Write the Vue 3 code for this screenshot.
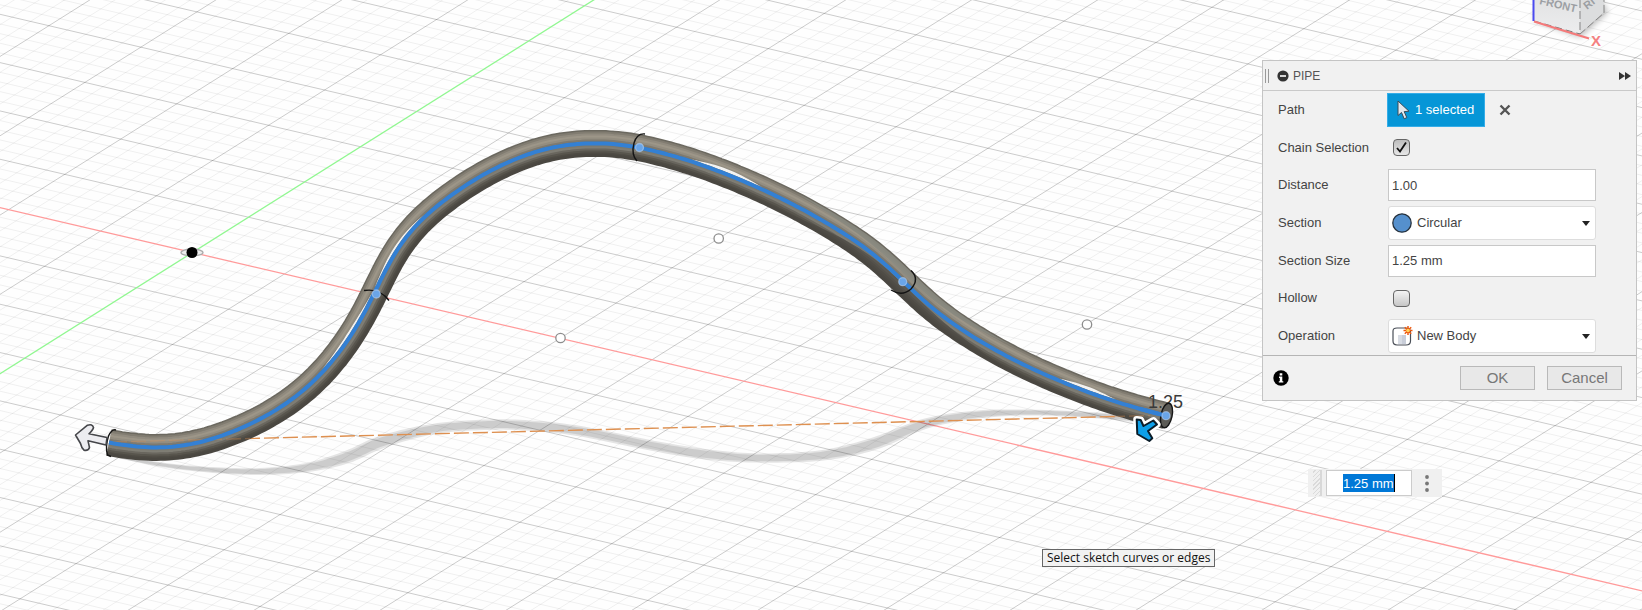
<script setup>
import { ref } from 'vue'

const distance = ref('1.00')
const sectionSize = ref('1.25 mm')
const floatingSize = ref('1.25 mm')
const chain = ref(true)
const hollow = ref(false)
const section = ref('Circular')
const operation = ref('New Body')

/* Ground grid: an origin and the two cell vectors */
const origin = [192.5, 252.5]
const u = [91.9, 21.45]
const v = [-56, 35.25]
const at = (a, b) => [origin[0] + a * u[0] + b * v[0], origin[1] + a * u[1] + b * v[1]]
const seg = (p, q) => `M${p[0].toFixed(1)} ${p[1].toFixed(1)}L${q[0].toFixed(1)} ${q[1].toFixed(1)}`

let minor = ''
let major = ''
for (let i = -150; i <= 200; i++) {
  if (i === 0) continue
  const line = seg(at(i / 5, -40), at(i / 5, 40)) + seg(at(-40, i / 5), at(40, i / 5))
  if (i % 5 === 0) major += line
  else minor += line
}
const xAxis = seg(at(-40, 0), at(40, 0))
const yAxis = seg(at(0, -40), at(0, 40))

/* Smooth curve through control points; extra components are interpolated too */
function smooth(pts, steps = 10) {
  const out = []
  for (let i = 0; i < pts.length - 1; i++) {
    const p0 = pts[Math.max(i - 1, 0)]
    const p1 = pts[i]
    const p2 = pts[i + 1]
    const p3 = pts[Math.min(i + 2, pts.length - 1)]
    for (let s = 0; s < steps; s++) {
      const t = s / steps
      out.push(p1.map((_, k) =>
        0.5 * (2 * p1[k] + (p2[k] - p0[k]) * t +
          (2 * p0[k] - 5 * p1[k] + 4 * p2[k] - p3[k]) * t * t +
          (3 * p1[k] - p0[k] - 3 * p2[k] + p3[k]) * t * t * t)))
    }
  }
  out.push(pts[pts.length - 1])
  return out
}

/* Evenly spaced samples along a polyline */
function resample(pts, step) {
  const out = [pts[0]]
  let need = step
  for (let i = 1; i < pts.length; i++) {
    let a = pts[i - 1]
    const b = pts[i]
    let len = Math.hypot(b[0] - a[0], b[1] - a[1])
    while (len >= need) {
      const t = need / len
      a = [a[0] + (b[0] - a[0]) * t, a[1] + (b[1] - a[1]) * t]
      out.push(a)
      len -= need
      need = step
    }
    need -= len
  }
  out.push(pts[pts.length - 1])
  return out
}

/* Moving average whose window narrows towards both ends */
function relax(pts, reach) {
  return pts.map((_, i) => {
    const r = Math.min(reach, i, pts.length - 1 - i)
    let x = 0
    let y = 0
    for (let k = i - r; k <= i + r; k++) {
      x += pts[k][0]
      y += pts[k][1]
    }
    return [x / (2 * r + 1), y / (2 * r + 1)]
  })
}

function shifted(pts, offset) {
  return pts.map((p, i) => {
    const a = pts[Math.max(i - 1, 0)]
    const b = pts[Math.min(i + 1, pts.length - 1)]
    const dx = b[0] - a[0]
    const dy = b[1] - a[1]
    const len = Math.hypot(dx, dy) || 1
    const d = typeof offset === 'function' ? offset(p, i, pts.length) : offset
    return [p[0] - (dy / len) * d, p[1] + (dx / len) * d]
  })
}

const join = (pts) => 'M' + pts.map((p) => `${p[0].toFixed(1)} ${p[1].toFixed(1)}`).join('L')

const raw = smooth([
  [109, 442.5], [132, 447], [158, 448.5], [184, 446.5], [208, 441], [243, 428], [275, 411.5], [304, 391], [330, 365],
  [352, 335], [368, 307], [376, 290], [389, 262], [405.5, 236], [421, 219], [440, 203], [473, 180], [507, 162],
  [540, 149.5], [567, 144], [597, 142.5], [623, 144], [639, 147], [673, 155.5], [700, 164], [740, 179.5],
  [787, 201], [833, 226.5], [873, 253], [904, 282], [925, 302.5], [946, 319.5], [986.7, 345.5], [1026.7, 366.5],
  [1073, 386.5], [1117, 402.5], [1166, 415.7],
])
const centre = relax(relax(relax(resample(raw, 4), 5), 5), 4)

const profile = [
  [-12, 3, '#6b685f'], [-10.5, 3, '#817c71'], [-8.5, 3, '#918b7f'], [-6.5, 3, '#9d9688'],
  [-4.5, 3, '#938d80'], [-2.5, 3, '#7f7a6f'], [0, 4, '#716d64'], [2.5, 3, '#7a786f'],
  [4.5, 3, '#7f7d74'], [6.5, 3, '#69665e'], [8.5, 3, '#58554d'], [10.5, 3, '#4e4b44'], [12, 3, '#4a4741'],
]
const tube = profile.map(([d, w, color]) => ({ d: join(shifted(centre, d)), w, color }))
const spine = join(centre)

const lens = (pts, near, far) =>
  join([
    ...shifted(pts, near),
    ...shifted(pts, (p, i, n) => near + far * Math.sin((Math.PI * i) / (n - 1))).reverse(),
  ]) + 'Z'
const range = (from, to) => centre.filter((p) => p[0] > from && p[0] < to)

/* Darker belly and greyer back around the last joint, then the bright reflections */
const belly = lens(range(790, 1010), 11, -9)
const back = lens(range(790, 1010), -12, 6)
const glints = [
  lens(range(322, 376), -2, -2),
  lens(range(376, 428), -2, -2),
  lens(range(690, 764), -2, -3),
  lens(range(1056, 1118), -2, -3),
]

const shadowPts = smooth([
  [118, 457, 2], [167, 465.5, 4], [213, 470, 5], [260, 471.5, 6], [307, 467.5, 8], [347, 457, 11],
  [383, 441.5, 11], [433, 429, 9], [480, 425, 9], [520, 425, 9], [576, 430.5, 9], [654, 446, 9],
  [707, 454.5, 9], [759, 458, 8], [821, 455.5, 9], [873, 444, 11], [926, 423.5, 9], [978, 414.5, 7],
  [1030, 412.5, 5], [1083, 414.5, 5], [1140, 419, 6],
])
const shadowShape = (k) =>
  join([...shifted(shadowPts, (p) => -p[2] * k), ...shifted(shadowPts, (p) => p[2] * k).reverse()]) + 'Z'
const shadows = [shadowShape(0.58), shadowShape(0.4)]

const joints = [[376.3, 294], [639.5, 147.5], [902.7, 281.7], [1166, 415.7]]
const freePoints = [[718.7, 238.5], [560.5, 338], [1087, 324.5]]
</script>

<template>
  <main class="viewport">
    <svg class="canvas" aria-hidden="true">
      <path :d="minor" class="minor" />
      <path :d="major" class="major" />
      <path :d="xAxis" class="x-axis" />
      <path :d="yAxis" class="y-axis" />

      <path v-for="(s, i) in shadows" :key="'s' + i" :d="s" class="shadow" />
      <path d="M112 442L1150 415.6" class="guide" />

      <ellipse cx="192" cy="252.5" rx="11" ry="3.5" class="origin-ring" />
      <circle cx="192" cy="252.5" r="5.5" fill="#000" />
      <circle v-for="(p, i) in freePoints" :key="'f' + i" :cx="p[0]" :cy="p[1]" r="4.7" class="free-point" />

      <g fill="none">
        <path v-for="(t, i) in tube" :key="'t' + i" :d="t.d" :stroke="t.color" :stroke-width="t.w" />
      </g>
      <path :d="belly" fill="#4b4943" opacity=".7" />
      <path :d="back" fill="#878880" opacity=".8" />
      <path v-for="(g, i) in glints" :key="'g' + i" :d="g" fill="#fff" opacity=".9" />
      <path d="M112 442L250 438.5M1110 416.6L1150 415.6" class="guide ghost" />
      <path :d="spine" class="spine" />

      <g class="seam">
        <path d="M116 430Q112 428.500 108.500 436Q105 447 107.500 455L111 456.500" />
        <path d="M364 290.500Q380 288 389 300.500" />
        <path d="M645 134Q637 133 634 143Q631 155 637 161" />
        <path d="M911 270.500Q920 279 911 289Q902 297 891 290" />
      </g>

      <text x="1148" y="408" class="dimension">1.25</text>
      <ellipse cx="1166.500" cy="415.500" rx="5.600" ry="12.500" transform="rotate(12 1166.500 415.500)" class="cap" />
      <path d="M1140 409L1166 415.700" class="spine" />
      <circle v-for="(p, i) in joints" :key="'j' + i" :cx="p[0]" :cy="p[1]" r="4" class="joint" />

      <path
        d="M75.500 435L87.500 425.200Q92.500 423.500 93.500 427.500Q93 430 89 433.800L107 437.500L106 445L88 440.800L89.500 447.500Q88.500 451 84 450.200Q81.500 448 80.500 443.500Z"
        class="arrow-start"
      />
      <g stroke-linejoin="round">
        <path d="M1137.300 434L1136.700 419.500L1140.700 420L1143.500 426L1153.300 420.500L1157 424.500L1148 431L1152.300 438.300L1149.300 441Z" stroke="#fff" stroke-width="7" fill="#fff" />
        <path d="M1137.300 434L1136.700 419.500L1140.700 420L1143.500 426L1153.300 420.500L1157 424.500L1148 431L1152.300 438.300L1149.300 441Z" stroke="#0a1c28" stroke-width="2" fill="#0d9fe8" />
      </g>
    </svg>

    <svg class="view-cube" width="96" height="60" aria-hidden="true">
      <defs>
        <linearGradient id="face" x1="0" y1="0" x2="0" y2="1">
          <stop offset="0" stop-color="#e2e3e4" />
          <stop offset="1" stop-color="#ededee" />
        </linearGradient>
        <filter id="soft" x="-30%" y="-30%" width="160%" height="160%">
          <feGaussianBlur stdDeviation="3" />
        </filter>
      </defs>
      <path d="M14 20L60 37L88 12L80 0L20 0Z" fill="#000" opacity=".28" filter="url(#soft)" />
      <path d="M14 0V21L60 34V0Z" fill="url(#face)" />
      <path d="M60 0V34L84 12V0Z" fill="#dcddde" />
      <path d="M60 0V34L84 13V0" fill="none" stroke="#858585" stroke-dasharray="8 3" />
      <path d="M14 21L60 34" fill="none" stroke="#777" stroke-dasharray="7 4" />
      <text x="19" y="4" transform="rotate(13 19 4)" class="face-text">FRONT</text>
      <text x="67" y="10" transform="rotate(-38 67 10)" class="face-text">RI</text>
      <path d="M13.500 0V21" stroke="#4a4af0" stroke-width="2" />
      <path d="M14 21.500L69 38.500" stroke="#f57a7a" stroke-width="2" />
      <text x="71" y="46" class="x-label">X</text>
    </svg>

    <section class="panel" aria-label="Pipe">
      <header class="panel-head">
        <span class="grip"></span>
        <button class="plain" type="button" aria-label="Collapse">
          <svg width="12" height="12" viewBox="0 0 12 12"><circle cx="6" cy="6" r="5.600" fill="#333" /><path d="M3 6H9" stroke="#fff" stroke-width="1.600" /></svg>
        </button>
        <h1>PIPE</h1>
        <button class="plain more" type="button" aria-label="Dock">
          <svg width="12" height="8" viewBox="0 0 12 8"><path d="M0 0L6 4L0 8ZM6 0L12 4L6 8Z" fill="#333" /></svg>
        </button>
      </header>

      <form id="pipe-form" class="rows" @submit.prevent>
        <div class="row">
          <span class="label">Path</span>
          <button class="selected" type="button">
            <svg width="13" height="20" viewBox="0 0 13 20"><path d="M1 1V15.500L4.500 12.500L7.200 18.800L9.800 17.600L7.200 11.600L12 11.200Z" fill="#e4e9ee" stroke="#3b4a57" /></svg>
            <span>1 selected</span>
          </button>
          <button class="plain clear" type="button" aria-label="Clear selection">
            <svg width="12" height="12" viewBox="0 0 12 12"><path d="M1.500 1.500L10.500 10.500M10.500 1.500L1.500 10.500" stroke="#555" stroke-width="2.400" /></svg>
          </button>
        </div>
        <div class="row">
          <label for="chain">Chain Selection</label>
          <span class="tick">
            <input id="chain" v-model="chain" type="checkbox" />
            <svg v-if="chain" width="17" height="17" viewBox="0 0 17 17"><path d="M4 9L7 12.500L13 3.500" fill="none" stroke="#111" stroke-width="1.800" /></svg>
          </span>
        </div>
        <div class="row">
          <label for="distance">Distance</label>
          <input id="distance" v-model="distance" class="field" type="text" />
        </div>
        <div class="row">
          <label for="section">Section</label>
          <span class="choice">
            <svg class="choice-icon" width="20" height="20" viewBox="0 0 20 20"><circle cx="10" cy="10" r="9.200" fill="#5590cd" stroke="#26323e" stroke-width="1.300" /></svg>
            <select id="section" v-model="section"><option>Circular</option></select>
            <svg class="caret" width="8" height="5" viewBox="0 0 8 5"><path d="M0 0H8L4 5Z" fill="#222" /></svg>
          </span>
        </div>
        <div class="row">
          <label for="size">Section Size</label>
          <input id="size" v-model="sectionSize" class="field" type="text" />
        </div>
        <div class="row">
          <label for="hollow">Hollow</label>
          <span class="tick"><input id="hollow" v-model="hollow" type="checkbox" /></span>
        </div>
        <div class="row">
          <label for="operation">Operation</label>
          <span class="choice">
            <svg class="choice-icon" width="20" height="20" viewBox="0 0 20 20">
              <path d="M1 5Q1 2 5 2H14Q18.500 2 18.500 6V15Q18.500 19 14 19H5Q1 19 1 15Z" fill="#fff" stroke="#4a4f58" stroke-width="1.200" />
              <path d="M6 9H10V18H6Z" fill="#d8dce4" /><path d="M10 9H14V18H10Z" fill="#c8cdd8" />
              <path d="M16 0V9M11.500 4.500H20.500M12.800 1.300L19.200 7.700M19.200 1.300L12.800 7.700" stroke="#ee5a10" stroke-width="1.500" />
              <circle cx="16" cy="4.500" r="1.800" fill="#ffd45a" />
            </svg>
            <select id="operation" v-model="operation"><option>New Body</option></select>
            <svg class="caret" width="8" height="5" viewBox="0 0 8 5"><path d="M0 0H8L4 5Z" fill="#222" /></svg>
          </span>
        </div>
      </form>

      <footer class="panel-foot">
        <button class="plain info" type="button" aria-label="Information">
          <svg width="16" height="16" viewBox="0 0 16 16"><circle cx="8" cy="8" r="7.700" fill="#000" /><path d="M6.700 3.200H9.300V5.400H6.700ZM6 6.600H9.300V11.200H10.300V12.600H5.800V11.200H6.800V8H6Z" fill="#fff" /></svg>
        </button>
        <button class="action" type="submit" form="pipe-form">OK</button>
        <button class="action" type="button">Cancel</button>
      </footer>
    </section>

    <div class="floating">
      <span class="hatch"></span>
      <input v-model="floatingSize" type="text" aria-label="Section size" />
      <button class="plain dots" type="button" aria-label="Options">
        <svg width="4" height="17" viewBox="0 0 4 17"><g fill="#777"><circle cx="2" cy="2" r="1.900" /><circle cx="2" cy="8.500" r="1.900" /><circle cx="2" cy="15" r="1.900" /></g></svg>
      </button>
    </div>

    <div class="hint" role="tooltip">Select sketch curves or edges</div>
  </main>
</template>

<style>
body {
  margin: 0;
  background: #fefefe;
}
</style>

<style scoped>
.viewport {
  position: relative;
  min-height: 100vh;
  overflow: hidden;
  font: 13px/16px "Liberation Sans", Arial, sans-serif;
  color: #444;
}
.viewport * {
  box-sizing: border-box;
}
.canvas {
  position: absolute;
  inset: 0;
  width: 100%;
  height: 100%;
}
.minor {
  stroke: #000;
  stroke-opacity: 0.06;
  fill: none;
}
.major {
  stroke: #000;
  stroke-opacity: 0.2;
  fill: none;
}
.x-axis {
  stroke: #ff9a9a;
  stroke-width: 1.3;
}
.y-axis {
  stroke: #90f790;
  stroke-width: 1.3;
}
.shadow {
  fill: #000;
  opacity: 0.1;
}
.guide {
  fill: none;
  stroke: #de9050;
  stroke-width: 1.4;
  stroke-dasharray: 15 4;
}
.ghost {
  opacity: 0.35;
}
.origin-ring {
  fill: #eee;
  stroke: #aaa;
  stroke-width: 1.3;
}
.free-point {
  fill: #fff;
  stroke: #8d8d8d;
  stroke-width: 1.3;
}
.spine {
  fill: none;
  stroke: #3380d4;
  stroke-width: 4;
}
.seam {
  fill: none;
  stroke: #141414;
  stroke-width: 1.4;
}
.dimension {
  font-size: 18px;
  fill: #3a3a3a;
}
.cap {
  fill: #5c5b56;
  stroke: #161616;
  stroke-width: 1.4;
}
.joint {
  fill: #6aa5e8;
  stroke: #b5cfee;
  stroke-opacity: 0.6;
  stroke-width: 1.3;
}
.arrow-start {
  fill: #ececf0;
  stroke: #45464a;
  stroke-width: 1.6;
  stroke-linejoin: round;
}
.view-cube {
  position: absolute;
  top: 0;
  right: 26px;
}
.face-text {
  font-size: 11px;
  font-weight: bold;
  fill: #9c9fa3;
}
.x-label {
  font-size: 15px;
  font-weight: bold;
  fill: #f58080;
}

.plain {
  display: flex;
  padding: 0;
  border: 0;
  background: none;
}
.panel {
  position: absolute;
  top: 60px;
  right: 5px;
  width: 375px;
  border: 1px solid #c4c4c4;
  background: #f1f1f1;
}
.panel-head {
  display: flex;
  align-items: center;
  height: 30px;
  padding: 0 5px 0 2px;
  border-bottom: 1px solid #c9c9c9;
}
.grip {
  width: 4px;
  height: 14px;
  margin-right: 8px;
  border: solid #999;
  border-width: 0 1px;
}
.panel-head h1 {
  margin: 0 0 0 4px;
  font: 12px/16px "Liberation Sans", Arial, sans-serif;
  color: #555;
}
.more {
  margin-left: auto;
}
.rows {
  display: grid;
  grid-auto-rows: 1fr;
  height: 264px;
}
.row {
  display: flex;
  align-items: center;
  padding-left: 15px;
}
.row > label,
.label {
  flex: none;
  width: 110px;
}
.selected {
  display: flex;
  align-items: center;
  gap: 5px;
  width: 98px;
  height: 34px;
  margin-left: -1px;
  padding: 0 8px 0 9px;
  border: 1px solid #35ade8;
  background: #0696d7;
  color: #fff;
  font: inherit;
  white-space: nowrap;
}
.clear {
  margin-left: 14px;
}
.tick {
  position: relative;
  display: flex;
  margin-left: 5px;
}
.tick input {
  appearance: none;
  width: 17px;
  height: 17px;
  margin: 0;
  border: 1px solid #666;
  border-radius: 4px;
  background: linear-gradient(#f4f4f4, #c6c6c6);
}
.tick input:checked {
  background: linear-gradient(#bdbdbd, #e6e6e6);
}
.tick svg {
  position: absolute;
  inset: 0;
  pointer-events: none;
}
.field,
.choice {
  flex: none;
  width: 208px;
}
.field {
  height: 32px;
  padding: 0 3px;
  border: 1px solid #c8c8c8;
  background: #fff;
  color: #444;
  font: inherit;
}
.choice {
  position: relative;
}
.choice select {
  display: block;
  appearance: none;
  width: 100%;
  height: 34px;
  padding: 0 24px 0 28px;
  border: 1px solid #ddd;
  border-radius: 3px;
  background: #fff;
  color: #444;
  font: inherit;
}
.choice-icon {
  position: absolute;
  left: 4px;
  top: 7px;
  overflow: visible;
  pointer-events: none;
}
.caret {
  position: absolute;
  right: 6px;
  top: 15px;
  pointer-events: none;
}
.panel-foot {
  display: flex;
  align-items: center;
  gap: 12px;
  height: 45px;
  padding: 0 14px 0 10px;
  border-top: 1px solid #b5b5b5;
}
.info {
  margin-right: auto;
}
.action {
  width: 75px;
  height: 24px;
  padding: 0;
  border: 1px solid #b9b9b9;
  background: #e8e8e8;
  color: #777;
  font: 15px/18px "Liberation Sans", Arial, sans-serif;
}
.floating {
  position: absolute;
  left: 1308px;
  top: 469px;
  display: flex;
  align-items: center;
  width: 134px;
  height: 28px;
  background: #f0f0f0;
}
.hatch {
  width: 9px;
  height: 26px;
  margin: 0 4px 0 5px;
  border-right: 2px solid #d8d8d8;
  background: repeating-linear-gradient(-45deg, #dadada 0 1px, #f0f0f0 1px 3px);
}
.floating input {
  width: 86px;
  height: 26px;
  padding: 0 16px;
  border: 1px solid #ccc;
  background:
    linear-gradient(#000, #000) 67px center / 1px 18px no-repeat,
    linear-gradient(#0078d7, #0078d7) 16px center / 52px 18px no-repeat,
    #fff;
  color: #fff;
  font: inherit;
}
.dots {
  margin-left: 13px;
}
.hint {
  position: absolute;
  left: 1042px;
  top: 549px;
  padding: 0 4px;
  border: 1px solid #666;
  background: #f2f2f2;
  color: #111;
  font: 12px/16px "Open Sans", "Noto Sans", sans-serif;
  white-space: nowrap;
}
</style>
